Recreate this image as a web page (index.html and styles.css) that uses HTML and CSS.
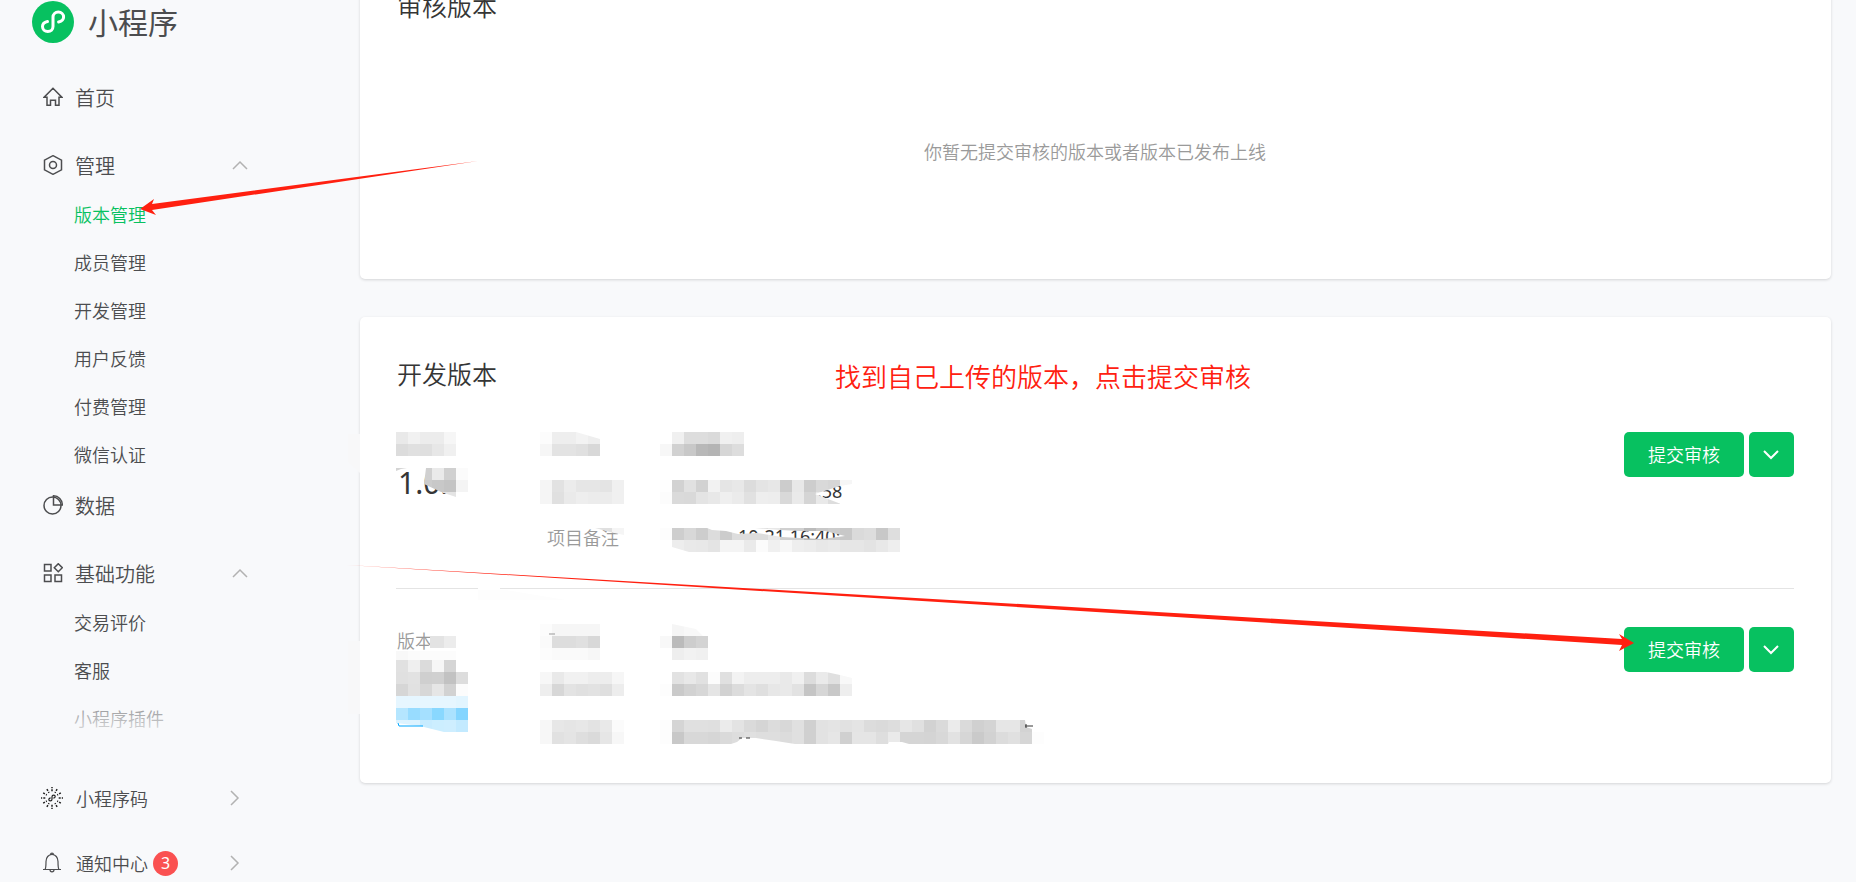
FILE: index.html
```html
<!DOCTYPE html>
<html lang="zh-CN">

<head>
    <title>小程序</title>
    <meta charset="utf-8">
    <meta name="viewport" content="width=device-width, initial-scale=1.0">
    <link rel="stylesheet" href="styles.css">
</head>

<body>
    <aside class="sidebar">
        <a class="logo" href="#">
            <svg width="42" height="42" viewBox="0 0 42 42">
                <circle cx="21" cy="21" r="21" fill="#07c160" />
                <path d="M15.500 20.500c-3 .7-5 2.500-5 5 0 3 2.300 5 5.300 5s5.200-2 5.200-5v-9.400c0-3 2.200-5 5.300-5s5.300 2 5.300 5c0 2.400-2 4.200-5 4.900" fill="none" stroke="#fff" stroke-width="3" stroke-linecap="round" />
            </svg>
            <span>小程序</span>
        </a>

        <nav>
            <a class="punkt" href="#">
                <svg class="ikon" viewBox="0 0 20 20">
                    <path d="M10 1.200L1.200 10.200H4V18.300H7.500V13.300H12.500V18.300H16V10.200H18.800Z" />
                </svg>
                首页
            </a>

            <a class="punkt" href="#">
                <svg class="ikon" viewBox="0 0 20 20">
                    <path d="M10 .7L18.500 5.200V14.800L10 19.300L1.500 14.800V5.200Z" />
                    <circle cx="10" cy="10" r="3.500" />
                </svg>
                管理
                <svg class="pil" viewBox="0 0 16 16">
                    <path d="M1 12L8 5L15 12" />
                </svg>
            </a>
            <ul>
                <li><a class="valgt" href="#">版本管理</a></li>
                <li><a href="#">成员管理</a></li>
                <li><a href="#">开发管理</a></li>
                <li><a href="#">用户反馈</a></li>
                <li><a href="#">付费管理</a></li>
                <li><a href="#">微信认证</a></li>
            </ul>

            <a class="punkt taet" href="#">
                <svg class="ikon" viewBox="0 0 20 20">
                    <circle cx="9.500" cy="10.500" r="8.500" />
                    <path d="M10.500 .8V10H19.300C19.300 4.800 15.500 .8 10.500 .8Z" />
                </svg>
                数据
            </a>

            <a class="punkt" href="#">
                <svg class="ikon" viewBox="0 0 20 20">
                    <path d="M1.500 1.500H8V8H1.500ZM1.500 12H8V18.500H1.500ZM12 12H18.500V18.500H12ZM15.300 .7L19.300 4.700L15.300 8.700L11.300 4.700Z" />
                </svg>
                基础功能
                <svg class="pil" viewBox="0 0 16 16">
                    <path d="M1 12L8 5L15 12" />
                </svg>
            </a>
            <ul>
                <li><a href="#">交易评价</a></li>
                <li><a href="#">客服</a></li>
                <li><a href="#">小程序插件</a></li>
            </ul>
        </nav>

        <div class="bund">
            <a href="#">
                <svg class="kode" viewBox="0 0 22 22">
                    <g id="straaler"></g>
                    <path d="M9.600 10.800c-1.100.2-1.800.9-1.800 1.700 0 .8.600 1.400 1.500 1.400s1.700-.6 1.700-1.600V9.700c0-1 .8-1.600 1.700-1.600s1.500.6 1.500 1.400c0 .8-.7 1.500-1.800 1.700" stroke-width="1.200" />
                </svg>
                小程序码
                <svg class="pil" viewBox="0 0 16 16">
                    <path d="M4 1L11 8L4 15" />
                </svg>
            </a>
            <a href="#">
                <svg class="kode klokke" viewBox="0 0 22 22">
                    <path d="M2 17.500H20M4 17.500C5 16 5 14.500 5 9.500C5 5.500 7.500 2.500 11 2.500S17 5.500 17 9.500C17 14.500 17 16 18 17.500M9.500 2.700C9.500 .5 12.500 .5 12.500 2.700M9 17.800C9 20.500 13 20.500 13 17.800" />
                </svg>
                通知中心
                <span class="badge">3</span>
                <svg class="pil" viewBox="0 0 16 16">
                    <path d="M4 1L11 8L4 15" />
                </svg>
            </a>
        </div>
    </aside>

    <main>
        <section class="kort">
            <h2>审核版本</h2>
            <p class="tom">你暂无提交审核的版本或者版本已发布上线</p>
        </section>

        <section class="kort">
            <h2>开发版本</h2>
            <p class="note">找到自己上传的版本，点击提交审核</p>

            <article class="version">
                <div class="nummer">
                    <p class="etiket"></p>
                    <p class="tal">1.0.</p>
                </div>
                <dl>
                    <dt></dt>
                    <dt></dt>
                    <dt>项目备注</dt>
                </dl>
                <div class="knapper">
                    <button type="button">提交审核</button>
                    <button type="button" class="mere" aria-label="更多">
                        <svg viewBox="0 0 16 16">
                            <path d="M1 5L8 12L15 5" />
                        </svg>
                    </button>
                </div>
                <svg class="slør" width="600" height="160">
                    <clipPath id="a1"><path d="M144 0H180L204 7V24H144Z" /></clipPath>
                    <clipPath id="a2"><path d="M30 36H72V60H60V65L45 60L28 52Z" /></clipPath>
                    <clipPath id="a3"><path d="M264 48H456V52L444 54L419 62L445 72H264Z" /></clipPath>
                    <clipPath id="a4"><path d="M199 96H228V103L214 100Z" /></clipPath>
                    <clipPath id="a5"><path d="M264 96H311L316 98L330 99L338 101L342 102L361 101L386 105L404 106L426 107L449 104L429 99L404 99L384 98L359 96H504V120H293L276 115V108H264Z" /></clipPath>
                    <text x="421" y="66">:58</text>
                    <text x="342" y="111">10-21 16:40:</text>
                    <path d="M0 36H11L5 37L0 39Z" fill="#d4d4d4" />
                    <path d="M-48 2H-36V41L-48 30Z" fill="#f8f8f9" />
                    <path d="M82 155H104V158H82Z" fill="#fff" />
                    <path d="M82 158H110L170 168H82Z" fill="#fdfdfd" />
                    <g data-x="0" data-y="0" data-rows="e9 f1 ec ec f6|dc e0 df e7 f0"></g>
                    <g data-x="24" data-y="36" data-rows="d0 ea d0 fb|cc c8 c4 f4|ff ff e4" clip-path="url(#a2)"></g>
                    <g data-x="144" data-y="0" data-rows="fc ee ee f3 ee|f6 e3 e3 e0 d8" clip-path="url(#a1)"></g>
                    <g data-x="264" data-y="0" data-rows="ff f0 dd dd da f0 ee|f7 d1 c8 b8 b4 d6 dd"></g>
                    <g data-x="144" data-y="48" data-rows="f5 e2 ec e6 e6 e4 f0|f5 e0 ea ee ec ec f0"></g>
                    <g data-x="264" data-y="48" data-rows="fe d2 e1 d2 f2 e5 e8 dc e4 e7 cc e8 cd d9 d6 f6|fc da d9 e4 e8 ef eb e1 ee ed d9 ea d5 e9 dd" clip-path="url(#a3)"></g>
                    <g data-x="192" data-y="96" data-rows="e4 e0 f5" clip-path="url(#a4)"></g>
                    <g data-x="264" data-y="96" data-rows="fd ce d8 cd dc cc dd dd dd e8 d0 d0 bb c8 cc c8 da dd c8 de|ff ed e9 e8 e4 f4 f4 ea fb f0 f7 ee ec e8 ea e6 e6 e3 e8 ee" clip-path="url(#a5)"></g>
                </svg>
            </article>

            <article class="version">
                <div class="nummer">
                    <p class="etiket">版本</p>
                    <p class="tal"></p>
                </div>
                <dl></dl>
                <div class="knapper">
                    <button type="button">提交审核</button>
                    <button type="button" class="mere" aria-label="更多">
                        <svg viewBox="0 0 16 16">
                            <path d="M1 5L8 12L15 5" />
                        </svg>
                    </button>
                </div>
                <svg class="slør" width="660" height="155">
                    <clipPath id="b1"><path d="M34 9H60V21H34Z" /></clipPath>
                    <clipPath id="b2"><path d="M0 69H72V105H48L24 99L0 96Z" /></clipPath>
                    <clipPath id="b3"><path d="M264 -3H276L300 2L307 9H312V33H264Z" /></clipPath>
                    <clipPath id="b4"><path d="M264 45H430L444 48L456 51V69H264Z" /></clipPath>
                    <clipPath id="b5"><path d="M264 93H629L630 100L636 102H648V117H513L506 115H493L492 117H399L380 114L360 111H346L341 115L335 117H264Z" /></clipPath>
                    <path d="M-48 14H-36V87H-48Z" fill="#f8f8f9" />
                    <g data-x="24" data-y="9" data-rows="e3 e3 ec" clip-path="url(#b1)"></g>
                    <g data-x="0" data-y="24" data-rows="f8 fb fc fc fc"></g>
                    <g data-x="0" data-y="33" data-rows="e1 ef db f6 d5 ff|e0 e2 cf d0 c2 dd|d6 e1 d7 e6 d2 fc"></g>
                    <g data-x="0" data-y="69" data-rows="e6f6ff e6f6ff e6f6ff e6f6ff e6f6ff e2f5ff|b5e6ff 98dcff a5e0ff 89d8ff abe2ff 84d5ff|ddf3ff ddf3ff c8ecff cceeff ceeeff c3eaff" clip-path="url(#b2)"></g>
                    <g data-x="144" data-y="-3" data-rows="fc f6 f6 f6 f6|fa dd dd e0 d8|fc fa fa fa f7"></g>
                    <g data-x="264" data-y="-3" data-rows="ff f5 f8 f8|f8 bb cd d3|ff ee f2 f0" clip-path="url(#b3)"></g>
                    <g data-x="144" data-y="45" data-rows="f7 e9 f1 f1 ed ed f6|ee d7 e3 e0 e2 df ed"></g>
                    <g data-x="264" data-y="45" data-rows="ff e2 e8 e1 fc e0 f3 ed ed ed e9 f0 dc ea e0 f8|fd ca d2 d7 e5 d2 dc e4 df e7 e9 e2 c5 d6 c8 ee" clip-path="url(#b4)"></g>
                    <g data-x="144" data-y="93" data-rows="f7 e7 e5 e7 e3 e9 fb|f7 e1 e4 de da e6 f7"></g>
                    <g data-x="264" data-y="93" data-rows="fd d5 e0 e0 df eb e3 da d5 dc d8 e0 d0 e2 e4 e1 e4 dc da dd e6 e0 d2 da eb da d0 d4 e6 e6 d3|fd c8 d8 d8 d6 da dd e0 de de dc e0 d0 e2 e6 d0 e5 e5 de ea d5 d5 d4 d8 e2 d6 ca d2 dc e0 d6 fd" clip-path="url(#b5)"></g>
                    <path d="M2 96L3 99H27" fill="none" stroke="#00a7ff" />
                    <path d="M153 7H159" stroke="#999" />
                    <path d="M343 111H346M350 111H354M629 99H637M630 97V101" stroke="#353535" />
                </svg>
            </article>
        </section>
    </main>

    <svg class="pile" width="1700" height="700">
        <path d="M478 161L152 204L154 199L140 209L156 215L152 210Z" />
        <path d="M347 565L1622 639L1619 634L1634 643L1619 651L1622 645Z" />
    </svg>

    <script>
        // slører felterne med små firkanter på 12px
        const ns = "http://www.w3.org/2000/svg";

        document.querySelectorAll(".slør g").forEach(g => {
            g.dataset.rows.split("|").forEach((row, r) => {
                row.split(" ").forEach((farve, c) => {
                    const rect = document.createElementNS(ns, "rect");
                    rect.setAttribute("x", +g.dataset.x + c * 12);
                    rect.setAttribute("y", +g.dataset.y + r * 12);
                    rect.setAttribute("width", 12);
                    rect.setAttribute("height", 12);
                    rect.setAttribute("fill", "#" + (farve.length == 2 ? farve.repeat(3) : farve));
                    g.appendChild(rect);
                });
            });
        });

        // stråler rundt om koden
        for (let i = 0; i < 12; i++) {
            const streg = document.createElementNS(ns, "path");
            streg.setAttribute("d", i % 3 ? "M11 .8V2.800M11 4V5" : "M11 0V1.200M11 2.300V4.300");
            streg.setAttribute("transform", `rotate(${i * 30 + 90} 11 11)`);
            document.querySelector("#straaler").appendChild(streg);
        }
    </script>
</body>

</html>
```
FILE: styles.css
```css
* {
    box-sizing: border-box;
}

body {
    margin: 0;
    min-height: 100vh;
    display: flex;
    position: relative;
    overflow-x: hidden;
    background-color: #f8f9fb;
    color: #353535;
    font-family: "Noto Sans", "Noto Sans CJK SC", sans-serif;
    font-size: 18px;
    font-weight: 350;
}

a {
    color: #4c4d4f;
    text-decoration: none;
}

h2,
p,
ul,
dl {
    margin: 0;
    padding: 0;
    list-style: none;
}

svg {
    flex-shrink: 0;
}

.sidebar {
    width: 360px;
    flex-shrink: 0;
    padding-top: 1px;
}

.logo {
    display: flex;
    align-items: center;
    gap: 14px;
    height: 42px;
    margin-left: 32px;
    font-size: 30px;
    font-weight: 400;
}

.logo span {
    padding-bottom: 3px;
}

nav {
    position: relative;
    padding-top: 12px;
}

/* menuen toner ud i bunden */
nav::after {
    content: "";
    position: absolute;
    left: 0;
    right: 0;
    bottom: 0;
    height: 64px;
    background: linear-gradient(rgba(248, 249, 251, 0), #f8f9fb);
    pointer-events: none;
}

.punkt {
    display: flex;
    align-items: center;
    height: 52px;
    width: 247px;
    margin: 16px 0 0 43px;
    font-size: 20px;
}

.taet {
    margin-top: 0;
}

.ikon {
    width: 20px;
    height: 20px;
    margin-right: 12px;
    fill: none;
    stroke: #4c4d4f;
    stroke-width: 1.500;
}

.pil {
    width: 16px;
    height: 16px;
    margin-left: auto;
    margin-right: 42px;
    fill: none;
    stroke: #b2b2b2;
    stroke-width: 1.500;
}

nav li a {
    display: block;
    padding-left: 74px;
    line-height: 48px;
}

nav .valgt {
    color: #07c160;
}

.bund {
    display: flex;
    flex-direction: column;
    gap: 29px;
    margin-top: 37px;
}

.bund a {
    display: flex;
    align-items: center;
    height: 36px;
    width: 242px;
    margin-left: 41px;
}

.bund .pil {
    margin-right: 40px;
}

.kode {
    width: 22px;
    height: 22px;
    margin-right: 13px;
    fill: none;
    stroke: #222;
    stroke-width: 1.500;
}

.klokke {
    stroke: #4c4d4f;
    stroke-width: 1.200;
}

.badge {
    width: 25px;
    height: 25px;
    margin-left: 5px;
    border-radius: 50%;
    background-color: #fa5151;
    color: #fff;
    font-size: 16px;
    font-weight: 400;
    line-height: 25px;
    text-align: center;
}

main {
    flex: 1;
    margin: -51px 25px 0 0;
}

.kort {
    position: relative;
    margin-bottom: 38px;
    padding: 37px 37px 0 36px;
    border-radius: 5px;
    background-color: #fff;
    box-shadow: 0 1px 3px rgba(0, 0, 0, .15);
}

.kort:last-child {
    margin-bottom: 0;
}

h2 {
    padding-left: 1px;
    font-size: 25px;
    font-weight: 350;
    line-height: 40px;
}

.tom {
    padding: 113px 0;
    color: #9a9a9a;
    line-height: 27px;
    text-align: center;
}

.note {
    position: absolute;
    top: 40px;
    left: 475px;
    color: #ff2010;
    font-size: 26px;
    line-height: 40px;
}

.version {
    position: relative;
    display: flex;
    height: 157px;
    margin-top: 38px;
    border-bottom: 1px solid #e4e4e4;
}

.version:last-child {
    height: 156px;
    border-bottom: 0;
}

.nummer {
    width: 151px;
    padding-left: 1px;
}

.etiket {
    height: 30px;
    color: #9a9a9a;
    line-height: 28px;
}

.tal {
    padding-left: 1px;
    font-size: 30px;
    font-weight: 400;
    line-height: 42px;
}

dl {
    flex: 1;
    color: #9a9a9a;
}

dt {
    height: 48px;
    line-height: 20px;
}

.knapper {
    display: flex;
    gap: 5px;
    height: 45px;
}

button {
    width: 120px;
    padding: 0 0 2px;
    border: none;
    border-radius: 5px;
    background-color: #07c160;
    color: #fff;
    font-family: inherit;
    font-size: 18px;
    font-weight: 350;
    cursor: pointer;
}

.mere {
    width: 45px;
    padding-right: 2px;
}

.mere svg {
    display: block;
    width: 16px;
    height: 16px;
    margin: auto;
    fill: none;
    stroke: #fff;
    stroke-width: 2;
}

.slør {
    position: absolute;
    top: 0;
    left: 0;
    overflow: visible;
    fill: #353535;
    font-weight: 400;
    pointer-events: none;
}

.pile {
    position: absolute;
    top: 0;
    left: 0;
    fill: #ff2010;
    pointer-events: none;
}
```
